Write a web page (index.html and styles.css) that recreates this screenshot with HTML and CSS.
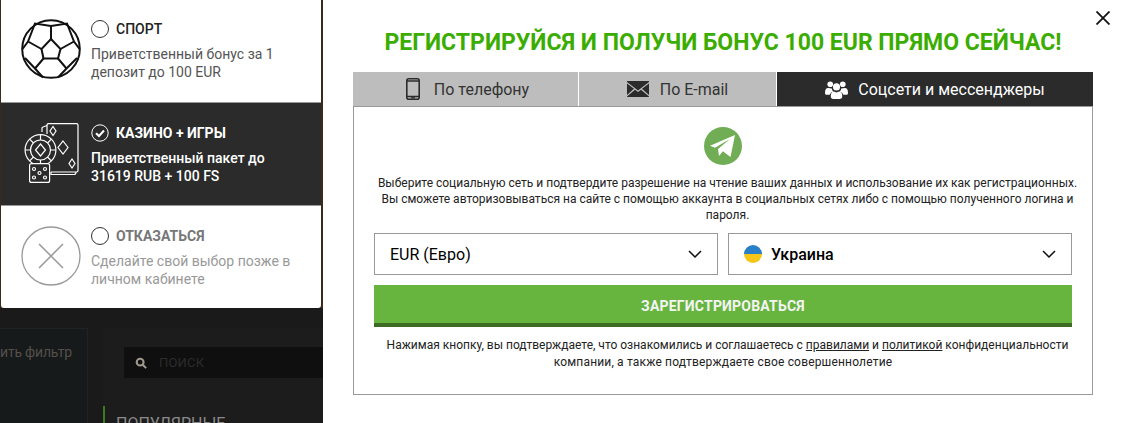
FILE: index.html
```html
<!DOCTYPE html>
<html lang="ru">
<head>
    <meta charset="UTF-8">
    <title>Регистрация</title>
    <link rel="stylesheet" href="styles.css">
</head>
<body>
    <div class="page">
        <aside class="side">
            <div class="bonus-list">
                <div class="bonus sport">
                    <svg class="bonus-icon" viewBox="0 0 60 60" fill="none" stroke="#111" stroke-width="2">
                        <circle cx="30" cy="30" r="28.800"/>
                        <path d="M30 20 L39.500 30 L37 39.500 L22.500 39.500 L20.500 30 Z"/>
                        <path d="M30 20 V7 M39.500 30 L53 22.500 M37 39.500 L45.500 49.500 M22.500 39.500 L14 49.500 M20.500 30 L7 22.500"/>
                        <path d="M30 7 L14 4.500 L7 22.500 L1.500 30 M30 7 L46 4.500 L53 22.500 L58.500 30 M14 49.500 L4 39 M14 49.500 L22 58.500 M45.500 49.500 L56 39 M45.500 49.500 L37 58.500"/>
                    </svg>
                    <div class="bonus-text">
                        <div class="bonus-title"><span class="radio"></span>СПОРТ</div>
                        <p>Приветственный бонус за 1 депозит до 100 EUR</p>
                    </div>
                </div>
                <div class="bonus active">
                    <svg class="bonus-icon" viewBox="0 0 60 60" fill="none" stroke="#fff" stroke-width="1.200">
                        <path d="M21 9 V5 Q21 4 22 4 L26 2.500"/>
                        <path d="M26 11 V2 Q26 0.600 27.500 0.600 H55.500 Q57 0.600 57 2 V47.500 Q57 49 55.500 49 H30"/>
                        <path d="M30 49 V51.500 H53 Q55 51.500 55 49"/>
                        <path d="M32 3.500 L35 8 L32 12.500 L29 8 Z"/>
                        <path d="M42 18 L47 24.500 L42 31 L37 24.500 Z"/>
                        <path d="M51 36 L54 40.500 L51 45 L48 40.500 Z"/>
                        <circle cx="19.500" cy="27" r="15.400" fill="#2b2b2b"/>
                        <circle cx="19.500" cy="27" r="10"/>
                        <path d="M19.500 21 L24.500 27 L19.500 33 L14.500 27 Z"/>
                        <path d="M19.500 11.600 V17 M19.500 37 V42.400 M4.100 27 H9.500 M29.500 27 H34.900 M8.600 16.100 L12.500 20 M30.400 16.100 L26.500 20 M8.600 37.900 L12.500 34 M30.400 37.900 L26.500 34"/>
                        <rect x="8.600" y="40.600" width="20" height="18.800" rx="2" fill="#2b2b2b"/>
                        <circle cx="13" cy="46" r="1.500"/>
                        <circle cx="24" cy="46" r="1.500"/>
                        <circle cx="18.500" cy="50" r="1.500"/>
                        <circle cx="13" cy="54.500" r="1.500"/>
                        <circle cx="24" cy="54.500" r="1.500"/>
                    </svg>
                    <div class="bonus-text">
                        <div class="bonus-title">
                            <svg class="radio-on" viewBox="0 0 18 18" fill="none" stroke="#fff">
                                <circle cx="9" cy="9" r="8.200" stroke-width="1"/>
                                <path d="M5 9.200 L8 12 L13 6.500" stroke-width="2"/>
                            </svg>КАЗИНО + ИГРЫ
                        </div>
                        <p>Приветственный пакет до 31619 RUB + 100 FS</p>
                    </div>
                </div>
                <div class="bonus refuse">
                    <svg class="bonus-icon" viewBox="0 0 60 60" fill="none" stroke="#999" stroke-width="1.300">
                        <circle cx="30" cy="30" r="29"/>
                        <path d="M18 18 L42 42 M42 18 L18 42" stroke-width="1.500"/>
                    </svg>
                    <div class="bonus-text">
                        <div class="bonus-title"><span class="radio"></span>ОТКАЗАТЬСЯ</div>
                        <p>Сделайте свой выбор позже в личном кабинете</p>
                    </div>
                </div>
            </div>
            <div class="under">
                <div class="filter">ить фильтр</div>
                <div class="catalog">
                    <div class="search">
                        <svg class="search-icon" viewBox="0 0 14 14" fill="none" stroke="#a09a8c" stroke-width="2.400">
                            <circle cx="6" cy="6" r="4"/>
                            <path d="M9 9 L13 13"/>
                        </svg>
                        <span>ПОИСК</span>
                    </div>
                    <div class="popular">ПОПУЛЯРНЫЕ</div>
                </div>
            </div>
        </aside>

        <main class="modal">
            <button class="close" aria-label="Закрыть">
                <svg viewBox="0 0 14 14" fill="none" stroke="#111" stroke-width="1.800"><path d="M0.500 0.500 L13.500 13.500 M13.500 0.500 L0.500 13.500"/></svg>
            </button>
            <h1>РЕГИСТРИРУЙСЯ И ПОЛУЧИ БОНУС 100 EUR ПРЯМО СЕЙЧАС!</h1>
            <div class="tabs">
                <div class="tab tab-phone">
                    <svg class="tab-icon phone-icon" viewBox="0 0 14 22">
                        <rect x="0.800" y="0.800" width="12.400" height="20.400" rx="2" fill="none" stroke="#2b2b2b" stroke-width="1.600"/>
                        <path d="M1 3 H13 M1 18.500 H13" stroke="#2b2b2b" stroke-width="1.400"/>
                        <rect x="5" y="19.200" width="4" height="1.200" fill="#2b2b2b"/>
                    </svg>
                    По телефону
                </div>
                <div class="tab tab-mail">
                    <svg class="tab-icon mail-icon" viewBox="0 0 22 16" fill="#2b2b2b">
                        <path d="M0 1 L11 9.500 L22 1 V0 H0 Z"/>
                        <path d="M0 2.500 V14 L7 7.800 Z M22 2.500 V14 L15 7.800 Z"/>
                        <path d="M0 16 H22 V15.500 L14 8.800 L11 11 L8 8.800 L0 15.500 Z"/>
                    </svg>
                    По E-mail
                </div>
                <div class="tab tab-social">
                    <svg class="tab-icon group-icon" viewBox="0 0 22 18" fill="#fff">
                        <circle cx="5" cy="4" r="2.700"/>
                        <circle cx="17" cy="4" r="2.700"/>
                        <circle cx="11" cy="6.500" r="3.400"/>
                        <path d="M0 12 Q0 7.500 3 7.500 L6.500 8 Q6.500 10 8 11 Q5 12 4.500 14 H1 Q0 14 0 12 Z"/>
                        <path d="M22 12 Q22 7.500 19 7.500 L15.500 8 Q15.500 10 14 11 Q17 12 17.500 14 H21 Q22 14 22 12 Z"/>
                        <path d="M5.500 15.500 Q5.500 11 8.500 11 Q11 12.500 13.500 11 Q16.500 11 16.500 15.500 Q16.500 18 14 18 H8 Q5.500 18 5.500 15.500 Z"/>
                    </svg>
                    Соцсети и мессенджеры
                </div>
            </div>
            <div class="form-box">
                <div class="tg-badge">
                    <svg viewBox="0 0 38 38" fill="#fff">
                        <path d="M31 8 L26.500 30 L18.800 24.200 L15 29 L14 22 L26 12 L11 20.800 L6 18.800 Z"/>
                    </svg>
                </div>
                <p class="hint">Выберите социальную сеть и подтвердите разрешение на чтение ваших данных и использование их как регистрационных. Вы сможете авторизовываться на сайте с помощью аккаунта в социальных сетях либо с помощью полученного логина и пароля.</p>
                <div class="selects">
                    <div class="select">
                        <span>EUR (Евро)</span>
                        <svg class="chevron" viewBox="0 0 14 8" fill="none" stroke="#111" stroke-width="1.500"><path d="M1 1 L7 7 L13 1"/></svg>
                    </div>
                    <div class="select">
                        <span class="flag"></span>
                        <span class="select-label">Украина</span>
                        <svg class="chevron" viewBox="0 0 14 8" fill="none" stroke="#111" stroke-width="1.500"><path d="M1 1 L7 7 L13 1"/></svg>
                    </div>
                </div>
                <button class="submit">ЗАРЕГИСТРИРОВАТЬСЯ</button>
                <p class="terms">Нажимая кнопку, вы подтверждаете, что ознакомились и соглашаетесь с <a href="#">правилами</a> и <a href="#">политикой</a> конфиденциальности <span class="terms-end">компании, а также подтверждаете свое совершеннолетие</span></p>
            </div>
        </main>
    </div>
</body>
</html>
```

FILE: styles.css
```css
* {
    box-sizing: border-box;
}

html, body {
    margin: 0;
    padding: 0;
    height: 423px;
    overflow: hidden;
}

body {
    font-family: 'Roboto', sans-serif;
    background: #fff;
}

.page {
    display: flex;
    height: 423px;
}

/* left column */
.side {
    width: 323px;
    flex-shrink: 0;
    background: #1a1a1a;
    display: flex;
    flex-direction: column;
    overflow: hidden;
}

.bonus-list {
    background: #3a2a1c;
    padding-left: 1px;
    padding-right: 2px;
    height: 308px;
    flex-shrink: 0;
}

.bonus {
    height: 103px;
    display: flex;
    align-items: flex-start;
    padding: 21px 25px 0 20px;
    background: #fff;
    border-bottom: 1px solid #999;
    color: #555;
}

.bonus.sport {
    padding-top: 20px;
}

.bonus.active {
    background: #2b2b2b;
    color: #fff;
}

.bonus.active p {
    font-weight: 500;
}

.bonus.refuse {
    height: 102px;
    color: #999;
    border-bottom: none;
    border-radius: 0 0 3px 3px;
}

.bonus-icon {
    width: 60px;
    height: 60px;
    flex-shrink: 0;
    margin: -1px 10px 0 0;
}

.bonus-text p {
    margin: 0;
    font-size: 14px;
    line-height: 18px;
}

.bonus-title {
    display: flex;
    align-items: center;
    height: 18px;
    margin-bottom: 7px;
    font-size: 14px;
    font-weight: 500;
    color: #222;
}

.active .bonus-title {
    color: #fff;
    font-weight: 700;
}

.refuse .bonus-title {
    color: #777;
    font-weight: 700;
}

.radio {
    width: 18px;
    height: 18px;
    border: 1px solid #333;
    border-radius: 50%;
    margin-right: 7px;
}

.radio-on {
    width: 18px;
    height: 18px;
    margin-right: 7px;
}

.under {
    flex: 1;
    display: flex;
    padding-top: 20px;
}

.filter {
    width: 88px;
    margin-right: 15px;
    height: 95px;
    padding-top: 15px;
    border: 1px solid #222;
    border-left: none;
    border-bottom: none;
    font-size: 14px;
    letter-spacing: -0.2px;
    color: #544f4b;
    background: #171a1a;
}

.catalog {
    flex: 1;
    background: #1c1c1c;
    padding-top: 19px;
}

.search {
    display: flex;
    align-items: center;
    height: 31px;
    margin-left: 21px;
    padding-left: 11px;
    background: #0f0f0f;
    font-size: 13px;
    letter-spacing: 0.2px;
    color: #2c2c2c;
}

.search-icon {
    width: 12px;
    height: 12px;
    margin-right: 12px;
}

.popular {
    margin-top: 28px;
    height: 20px;
    padding: 8px 0 0 11px;
    border-left: 2px solid #3f7a1f;
    font-size: 16px;
    color: #8a8a8a;
    white-space: nowrap;
}

/* modal */
.modal {
    flex: 1;
    position: relative;
    padding: 0 29px 0 30px;
}

.close {
    position: absolute;
    top: 11px;
    right: 12px;
    width: 14px;
    height: 14px;
    padding: 0;
    border: none;
    background: none;
}

.close svg {
    display: block;
}

h1 {
    margin: 0;
    height: 72px;
    padding-top: 28px;
    font-size: 23px;
    line-height: 30px;
    font-weight: 700;
    text-align: center;
    color: #3aad00;
    white-space: nowrap;
}

.tabs {
    display: flex;
    height: 34px;
    font-size: 16px;
}

.tab {
    display: flex;
    align-items: center;
    justify-content: center;
    background: #bdbdbd;
    color: #333;
}

.tab-phone {
    width: 225px;
    margin-right: 1px;
    padding-left: 4px;
}

.tab-mail {
    width: 197px;
    margin-right: 1px;
}

.tab-social {
    flex: 1;
    background: #2b2b2b;
    color: #fff;
}

.tab-icon {
    margin-right: 11px;
}

.phone-icon {
    width: 14px;
    height: 22px;
    margin-right: 14px;
}

.mail-icon {
    width: 22px;
    height: 16px;
}

.group-icon {
    width: 23px;
    height: 19px;
    margin-right: 10px;
}

.form-box {
    height: 289px;
    border: 1px solid #999;
    padding: 20px 20px 0;
    text-align: center;
}

.tg-badge {
    width: 38px;
    height: 38px;
    margin: 0 auto 10px;
    border-radius: 50%;
    background: #70ad54;
}

.tg-badge svg {
    display: block;
}

.hint {
    margin: 0 -13px 10px -4px;
    font-size: 12px;
    line-height: 16px;
    color: #222;
}

.selects {
    display: flex;
    gap: 10px;
    margin-bottom: 10px;
}

.select {
    flex: 1;
    display: flex;
    align-items: center;
    height: 42px;
    padding: 0 15px;
    border: 1px solid #999;
    font-size: 16px;
    color: #000;
}

.select span:first-child {
    margin-right: auto;
}

.select span.flag {
    width: 18px;
    height: 18px;
    margin-right: 9px;
    border-radius: 50%;
    background: linear-gradient(#2a7fc9 0 50%, #f5c518 50% 100%);
}

.select-label {
    margin-right: auto;
    font-weight: 500;
}

.chevron {
    width: 14px;
    height: 8px;
}

.submit {
    display: block;
    width: 100%;
    height: 42px;
    padding: 4px 0 0;
    border: none;
    border-bottom: 4px solid #3d6b24;
    background: #67b53f;
    font-family: inherit;
    font-size: 14px;
    font-weight: 700;
    letter-spacing: 0.2px;
    color: #f4f4f4;
}

.terms {
    margin: 10px 0 0;
    padding: 0 2px;
    font-size: 12px;
    line-height: 17px;
    text-indent: 9px;
    color: #222;
}

.terms a {
    color: #222;
}

.terms-end {
    letter-spacing: 0.17px;
}
```
